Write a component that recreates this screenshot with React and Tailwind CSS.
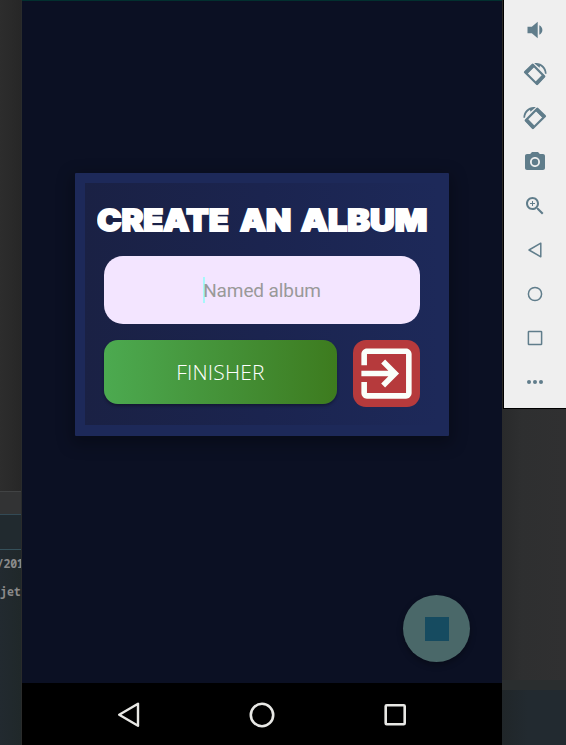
const iconButton = "flex h-11 w-full items-center justify-center";

function Filled({ d }) {
  return (
    <svg viewBox="0 0 24 24" className="size-6" fill="currentColor">
      <path d={d} />
    </svg>
  );
}

function Rotate({ flipped }) {
  return (
    <svg viewBox="0 0 24 24" className={flipped ? "size-6 -scale-x-100" : "size-6"} fill="currentColor">
      <path
        fillRule="evenodd"
        d="M1.3 9.2 8.8 2Q9.7 1.2 10.6 2L22 13.5Q22.8 14.4 22 15.3L15 22.8Q14.1 23.6 13.2 22.8L1.3 11.1Q.4 10.2 1.3 9.2ZM4.7 11.2 12.9 19.4 18.9 13.4 10.7 5.2Z"
      />
      <path d="M1.3 10.2 9.7 2 12 4.3 3.8 12.5ZM19.8 12.2 22.3 14.6 14.1 22.9 11.8 20.6Z" />
      <path d="M11.2 1.2C17-.3 23.6 4.2 23.6 11.7L22 11.7C21.7 8.1 19.9 5.2 17 3.7L16.6 5.7Z" />
    </svg>
  );
}

function Toolbar() {
  return (
    <aside className="h-[409px] w-[63px] border-b border-l border-black bg-[#efefef] pt-2 text-[#607d8b]">
      <div className={iconButton}>
        <Filled d="M19.4 12c0-1.9-1.2-3.9-3.1-4.7v9.4c1.9-.8 3.1-2.8 3.1-4.7zM4.5 8.8v6.4h4.3l5.9 5V3.8L8.8 8.8H4.5z" />
      </div>
      <div className={iconButton}><Rotate /></div>
      <div className={iconButton}><Rotate flipped /></div>
      <div className={iconButton}>
        <Filled d="M9 2 7.17 4H4c-1.1 0-2 .9-2 2v12c0 1.1.9 2 2 2h16c1.1 0 2-.9 2-2V6c0-1.1-.9-2-2-2h-3.17L15 2H9zm3 15c-2.76 0-5-2.24-5-5s2.24-5 5-5 5 2.24 5 5-2.24 5-5 5zm0-1.8a3.2 3.2 0 1 0 0-6.4 3.2 3.2 0 0 0 0 6.4z" />
      </div>
      <div className={iconButton}>
        <Filled d="M15.5 14h-.79l-.28-.27C15.41 12.59 16 11.11 16 9.5 16 5.91 13.09 3 9.5 3S3 5.91 3 9.5 5.91 16 9.5 16c1.61 0 3.09-.59 4.23-1.57l.27.28v.79l5 4.99L20.49 19l-4.99-5zm-6 0C7.01 14 5 11.99 5 9.5S7.01 5 9.5 5 14 7.01 14 9.5 11.99 14 9.5 14zM10 7H9v2H7v1h2v2h1v-2h2V9h-2z" />
      </div>
      <div className={iconButton}>
        <svg viewBox="0 0 24 24" className="size-6" fill="none" stroke="currentColor" strokeWidth="1.5" strokeLinejoin="round">
          <path d="M17.8 5.2v13.6L6 12Z" />
        </svg>
      </div>
      <div className={iconButton}>
        <svg viewBox="0 0 24 24" className="size-6" fill="none" stroke="currentColor" strokeWidth="1.5">
          <circle cx="12" cy="12" r="6.6" />
        </svg>
      </div>
      <div className={iconButton}>
        <svg viewBox="0 0 24 24" className="size-6" fill="none" stroke="currentColor" strokeWidth="1.5">
          <rect x="5.4" y="5.4" width="13.2" height="13.2" rx="0.6" />
        </svg>
      </div>
      <div className={iconButton}>
        <svg viewBox="0 0 24 24" className="size-6" fill="currentColor">
          <circle cx="6" cy="12" r="2" />
          <circle cx="12" cy="12" r="2" />
          <circle cx="18" cy="12" r="2" />
        </svg>
      </div>
    </aside>
  );
}

function Dialog() {
  return (
    <section className="ml-[53px] h-[263px] w-[374px] rounded-[1px] bg-[#1d2959] p-[10px] shadow-[0_5px_16px_3px_rgba(0,0,0,0.3)]">
      <div className="h-[242px] bg-linear-to-r from-[#1a2144] via-[#1b244f] to-[#1d2959] pt-[19px]">
        <h1 className="ml-[12px] flex h-[36px] w-[336px] items-center whitespace-nowrap font-['Inter'] text-[30px] leading-[36px] font-black text-white [-webkit-text-stroke:1.8px_white]">
          <span className="w-[143px] origin-left scale-x-[1.09]">CREATE</span>
          <span className="w-[61px] origin-left scale-x-[1.09]">AN</span>
          <span className="origin-left scale-x-[1.135]">ALBUM</span>
        </h1>
        <div className="mt-[18px] ml-[19px] flex h-[68px] w-[316px] items-center justify-center rounded-[19px] bg-[#f3e5ff] font-['Roboto'] text-[19px] text-[#999999]">
          <span className="h-[26px] w-[2px] bg-[#a7f7fa]" />
          <span className="-ml-[2px] pt-[2px] tracking-[-0.1px]">Named album</span>
        </div>
        <div className="mt-[16px] ml-[19px] flex gap-[16px]">
          <button className="flex h-[64px] w-[233px] items-center justify-center rounded-[14px] bg-linear-to-r from-[#4caa50] to-[#3d7b1e] pt-[2px] font-['Open_Sans'] text-[21px] font-light tracking-[0.2px] text-white shadow-[0_2px_3px_rgba(0,0,0,0.3)]">
            FINISHER
          </button>
          <button className="size-[67px] rounded-[13px] bg-[#b63a3c] text-[#fafffa]">
            <svg viewBox="0 0 24 24" className="size-[67px]" fill="currentColor">
              <path d="M10.09 15.59 11.5 17l5-5-5-5-1.41 1.41L12.67 11H3v2h9.67l-2.58 2.59zM19 3H5c-1.11 0-2 .9-2 2v4h2V5h14v14H5v-4H3v4c0 1.1.89 2 2 2h14c1.1 0 2-.9 2-2V5c0-1.1-.9-2-2-2z" />
            </svg>
          </button>
        </div>
      </div>
    </section>
  );
}

export default function App() {
  return (
    <div className="flex h-[745px] w-[566px] overflow-hidden bg-[#2c2c2c]">
      <div className="flex w-[22px] flex-col overflow-hidden border-r border-[#292b2b] bg-linear-to-r from-[#2d2d2d] to-[#272727] font-['Noto_Sans_Mono','DejaVu_Sans_Mono',monospace] text-[11.5px] font-bold text-[#8b8b8b]">
        <div className="h-[491px] shrink-0" />
        <div className="h-[24px] shrink-0 border-t border-b border-t-[#414344] border-b-[#334a55] bg-[#323334]" />
        <div className="h-[35px] shrink-0 border-b border-[#35505a] bg-[#212a2f]" />
        <div className="flex-1 bg-linear-to-r from-[#222a30] to-[#20282a] pt-[6px]">
          <p className="-ml-[3px] h-7 leading-4 tracking-[-0.3px] whitespace-nowrap">/201</p>
          <p className="h-7 leading-4 whitespace-nowrap">jet</p>
        </div>
      </div>
      <main className="flex w-[480px] flex-col bg-[#0b1023]">
        <div className="h-px bg-[#02302f]" />
        <div className="h-[682px] pt-[172px]">
          <Dialog />
          <div className="mt-[159px] ml-[381px] flex size-[67px] items-center justify-center rounded-full bg-[#4a6869] shadow-[0_3px_6px_rgba(0,0,0,0.3)]">
            <div className="size-6 bg-[#164b60]" />
          </div>
        </div>
        <nav className="flex h-[62px] items-center bg-black pl-[91px] text-[#e8e8e5]">
          <svg viewBox="0 0 32 32" className="size-8" fill="none" stroke="currentColor" strokeWidth="2.4" strokeLinejoin="round">
            <path d="M25 5.7v22L6.2 16.7Z" />
          </svg>
          <svg viewBox="0 0 32 32" className="ml-[101px] size-8" fill="none" stroke="currentColor" strokeWidth="2.6">
            <circle cx="16" cy="17" r="11.2" />
          </svg>
          <svg viewBox="0 0 32 32" className="ml-[101px] size-8" fill="none" stroke="currentColor" strokeWidth="2.6">
            <rect x="6.7" y="7.3" width="19" height="19" rx="1" />
          </svg>
        </nav>
      </main>
      <div className="flex w-16 flex-col">
        <div className="flex h-[409px] bg-[#2a2926] pl-px">
          <Toolbar />
        </div>
        <div className="h-[271px] bg-linear-to-r from-[#292a2b] via-[#2e2f30] via-30% to-[#303031]" />
        <div className="h-[10px] bg-[#2a2e2f]" />
        <div className="flex-1 bg-linear-to-r from-[#202629] to-[#222a30] to-40%" />
      </div>
    </div>
  );
}
